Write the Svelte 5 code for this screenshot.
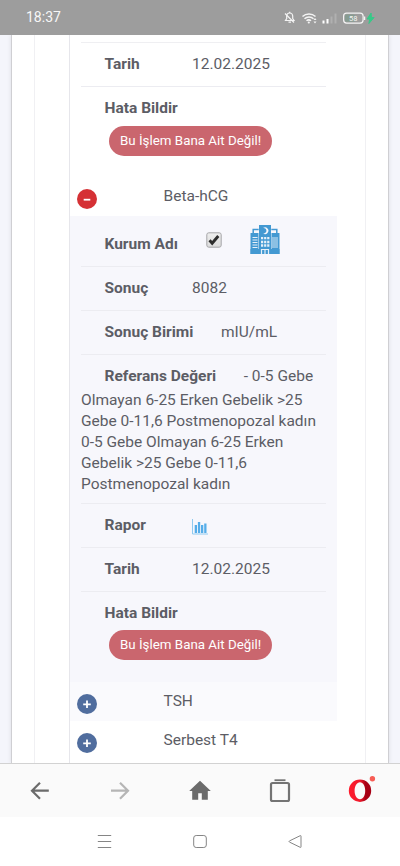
<script>
  let results = $state([
    { name: 'Beta-hCG', open: true },
    { name: 'TSH', open: false },
    { name: 'Serbest T4', open: false }
  ]);

  const date = '12.02.2025';
  const reference =
    '- 0-5 Gebe Olmayan 6-25 Erken Gebelik >25 Gebe 0-11,6 Postmenopozal kadın 0-5 Gebe Olmayan 6-25 Erken Gebelik >25 Gebe 0-11,6 Postmenopozal kadın';
</script>

{#snippet dateAndReport()}
  <li><span class="label">Tarih</span><span>{date}</span></li>
  <li class="report">
    <span class="label">Hata Bildir</span>
    <button class="pill">Bu İşlem Bana Ait Değil!</button>
  </li>
{/snippet}

<div class="screen">
  <header>
    <span class="time">18:37</span>
    <svg class="status" width="96" height="20" viewBox="0 0 96 20" fill="none">
      <!-- muted bell -->
      <g stroke="#f4f4f4" stroke-width="1.2">
        <path d="M3.500 12.500h8.500l-1.300-2V8a3 3 0 0 0-6 0v2.500z" />
        <path d="M3 5.500l9 9M6.500 14.200h2.500M7.700 3.800v1.200" />
      </g>
      <!-- wifi -->
      <g stroke="#f4f4f4" stroke-width="1.500">
        <path d="M20.500 8.500a9.500 9.500 0 0 1 13 0" />
        <path d="M22.500 10.800a6.500 6.500 0 0 1 9 0" />
        <path d="M24.500 12.800a3.500 3.500 0 0 1 4.500 0" />
      </g>
      <circle cx="26.800" cy="14.500" r="1.100" fill="#f4f4f4" />
      <path d="M31.500 12l1.500-2 1.500 2zM31.500 13.500l1.500 2 1.500-2z" fill="#f4f4f4" />
      <!-- signal -->
      <path d="M40.500 12.500h2v3h-2zM44.500 11h2v4.500h-2z" fill="#fff" />
      <path d="M48.500 8.500h2v7h-2zM52.500 5.500h2v10h-2z" fill="#b0b0b0" />
      <!-- battery -->
      <rect x="61.600" y="5.100" width="19.500" height="10" rx="3" stroke="#f4f4f4" stroke-width="1.200" />
      <rect x="63" y="6.500" width="10" height="7.200" rx="1.500" fill="#879c91" />
      <path d="M82.600 8.500v3.500" stroke="#f4f4f4" stroke-width="1.300" />
      <text x="71.300" y="12.800" text-anchor="middle">58</text>
      <path d="M89.100 5l-4 6h2.600l-.8 4.500 5.200-6h-2.700z" fill="#37c988" stroke="#37c988" />
    </svg>
  </header>

  <div class="page">
    <div class="card">
      <div class="inner">
        <div class="table">
          <ul class="details previous">
            {@render dateAndReport()}
          </ul>
          {#each results as result, i (result.name)}
            <div class="result" class:odd={i % 2 === 1}>
              <button
                class="toggle"
                class:open={result.open}
                aria-label={result.name}
                onclick={() => (result.open = !result.open)}
              >
                <svg width="10" height="10" viewBox="0 0 10 10" stroke="#fff" stroke-width="1.800">
                  {#if result.open}
                    <path d="M1.700 5.700h6.600" />
                  {:else}
                    <path d="M1.200 5.300h7.600M5 1.500v7.600" />
                  {/if}
                </svg>
              </button>
              <span>{result.name}</span>
            </div>
            {#if result.open}
              <ul class="details expanded">
                <li class="institution">
                  <span class="label">Kurum Adı</span>
                  <span class="check">
                    <svg width="16" height="16" viewBox="0 0 16 16">
                      <defs>
                        <linearGradient id="box" x2="0" y2="1">
                          <stop stop-color="#eee" />
                          <stop offset="1" stop-color="#dcdcdc" />
                        </linearGradient>
                      </defs>
                      <rect x=".8" y=".8" width="14.400" height="14.400" rx="2" fill="url(#box)" stroke="#a5a5a8" />
                      <path d="M3.500 8.200l2.700 3L12.300 4" fill="none" stroke="#2d2d2d" stroke-width="2.900" />
                    </svg>
                  </span>
                  <svg class="hospital" width="30" height="30" viewBox="0 0 30 30" fill="#4399d2">
                    <path d="M9 0h12v29H9zM.5 10h8v19h-8zM21.500 8h8v21h-8z" />
                    <path d="M3.200 8V4.600h5.500M26.800 8V4.600h-5.500" fill="none" stroke="#4399d2" stroke-width="1.500" />
                    <path d="M.5 8h8v2h-8zM.5 24h29v5H.500z" />
                    <path d="M13 3.100a3.300 3.300 0 1 1 0 5.200 2.700 2.700 0 1 0 0-5.200z" fill="#f7f7fc" />
                    <g stroke="#e5f0f9">
                      <path d="M11 13.200h8.500M11 17h8.500M11 20.500h8.500" stroke-width="2.300" stroke-dasharray="2.200 .9" />
                      <path d="M2.500 12.500h5M2.500 15h5M2.500 17.500h5M2.500 20h5M2.500 22.500h5" stroke-width="1.200" />
                      <path d="M23 12v11M25 12v11M27 12v11" stroke-width=".9" />
                      <path d="M11.500 29v-4.500h7V29M15 24.500V29" fill="none" stroke-width="1.200" />
                    </g>
                  </svg>
                </li>
                <li><span class="label">Sonuç</span><span>8082</span></li>
                <li><span class="label">Sonuç Birimi</span><span>mIU/mL</span></li>
                <li><span class="label">Referans Değeri</span>{reference}</li>
                <li class="chart">
                  <span class="label">Rapor</span>
                  <svg width="16" height="17" viewBox="0 0 16 17" fill="#55ade9">
                    <path d="M2.700 7h2.300v8H2.700zM5.900 4h2.300v11H5.900zM9 7h2.300v8H9zM12.200 5.500h2.300V15h-2.300z" />
                    <path d="M.5 1v15H16" fill="none" stroke="#8fcaf0" />
                  </svg>
                </li>
                {@render dateAndReport()}
              </ul>
            {/if}
          {/each}
        </div>
      </div>
    </div>
  </div>

  <nav class="browser">
    <svg viewBox="0 0 24 24" stroke="#6b6b6b">
      <path d="M20.800 11.700H4M12 3.700l-8 8 8 8" />
    </svg>
    <svg viewBox="0 0 24 24" stroke="#b5b5b5">
      <path d="M3 11.700h17M12 3.700l8 8-8 8" />
    </svg>
    <svg viewBox="0 0 24 24">
      <path d="M12 1.800L1.200 12.100h3v8.600h6v-6.400h3.600v6.400h6v-8.600h3z" fill="#6b6b6b" />
    </svg>
    <svg viewBox="0 0 24 24" stroke="#747474">
      <rect x="3" y="4" width="18" height="18" rx="1.500" />
      <path d="M6.500 1.200h11" stroke-width="1.800" />
    </svg>
    <svg viewBox="0 0 24 24">
      <defs>
        <linearGradient id="opera">
          <stop stop-color="#ff1b2d" />
          <stop offset=".5" stop-color="#f01a2c" />
          <stop offset=".75" stop-color="#a70014" />
          <stop offset="1" stop-color="#a70014" />
        </linearGradient>
      </defs>
      <path
        d="M12 .5a11.200 11.200 0 1 0 0 22.400A11.200 11.200 0 1 0 12 .5zM12 3.200c3.200 0 5.200 3.800 5.200 8.500s-2 8.500-5.200 8.500-5.400-3.800-5.400-8.500 2.200-8.500 5.400-8.500z"
        fill="url(#opera)"
        fill-rule="evenodd"
      />
      <circle cx="24.400" cy="-.2" r="2.700" fill="#f75d55" />
    </svg>
  </nav>

  <nav class="system">
    <svg viewBox="0 0 16 16"><path d="M.8 1.500h13.400M.8 7.500h13.400M.8 13.500h13.400" /></svg>
    <svg viewBox="0 0 16 16"><rect x="1.700" y="1.500" width="12.600" height="12" rx="2.500" /></svg>
    <svg viewBox="0 0 16 16">
      <path d="M14 2.200v10.600q0 .9-.8.500L2.500 8.100q-.9-.6 0-1.200l10.700-5.200q.8-.4.800.5z" />
    </svg>
  </nav>
</div>

<style>
  :global(body) {
    margin: 0;
    background: #fff;
  }

  .screen {
    display: flex;
    flex-direction: column;
    width: 400px;
    height: 866px;
    overflow: hidden;
    font-family: Roboto, sans-serif;
    font-size: 15.5px;
    line-height: 21px;
    color: #5c5d65;
  }

  header {
    display: flex;
    flex: none;
    align-items: center;
    justify-content: space-between;
    box-sizing: border-box;
    height: 35px;
    padding: 0 22px 0 26px;
    background: #9d9d9d;
    color: #f7f7f7;
  }

  .time {
    font-size: 14px;
  }

  .status {
    overflow: visible;
  }

  .status text {
    fill: #f4f4f4;
    font-size: 7.5px;
  }

  .page {
    flex: 1;
    min-height: 0;
    overflow: hidden;
    padding: 0 11px;
    background: #f4f5fb;
  }

  .card {
    height: 100%;
    box-sizing: border-box;
    padding: 0 22px;
    border: solid #cfcfd3;
    border-width: 0 1px;
    background: #fff;
    box-shadow: 0 0 4px #dcdce2;
  }

  .inner {
    height: 100%;
    box-sizing: border-box;
    border: solid #f0f0f3;
    border-width: 0 1px;
    padding-left: 34px;
  }

  .table {
    width: 267px;
    height: 100%;
    border-left: 1px solid #e6e6eb;
  }

  .details {
    list-style: none;
    margin: 0;
    padding: 0 11px;
  }

  .previous {
    height: 135px;
    padding-top: 7px;
  }

  .previous::before {
    content: '';
    display: block;
    height: 1px;
    background: #efeff2;
  }

  .expanded {
    box-sizing: border-box;
    height: 466px;
    padding-top: 7px;
    background: #f7f7fc;
  }

  li {
    padding: 11.4px 0 7.5px;
    border-bottom: 1px solid #ececf1;
  }

  .label {
    display: inline-block;
    min-width: 60px;
    margin-right: 27.5px;
    padding: 0 0 3px 23.5px;
    font-weight: 700;
  }

  .institution,
  .chart {
    display: flex;
    box-sizing: border-box;
    height: 44px;
  }

  .check {
    margin: -2.5px 28px 0 0;
    padding-left: 1px;
  }

  .hospital {
    margin-top: -9.5px;
  }

  .chart svg {
    margin-top: 3px;
  }

  .report {
    border: 0;
  }

  .pill {
    display: block;
    height: 30px;
    margin: 3.5px 0 0 28px;
    padding: 0 11px 1px;
    border: 0;
    border-radius: 15px;
    background: #ca666e;
    color: #fff;
    font: 13.35px Roboto, sans-serif;
  }

  .result {
    display: flex;
    box-sizing: border-box;
    height: 39px;
    padding: 9.4px 0 0 6.5px;
  }

  .odd {
    background: #fafafd;
  }

  .toggle {
    display: flex;
    align-items: center;
    justify-content: center;
    width: 20px;
    height: 20px;
    margin: 3px 67px 0 0;
    padding: 0;
    border: 0;
    border-radius: 50%;
    background: #506d9e;
  }

  .toggle.open {
    background: #d53135;
  }

  .browser {
    display: grid;
    grid-template-columns: repeat(5, 1fr);
    flex: none;
    place-items: center;
    height: 53px;
    border-top: 1px solid #d2d2d2;
    background: #fafafa;
  }

  .browser svg {
    width: 24px;
    height: 24px;
    overflow: visible;
    fill: none;
    stroke-width: 2.2;
  }

  .system {
    display: flex;
    flex: none;
    justify-content: center;
    gap: 79px;
    height: 49px;
    align-items: center;
    background: #fff;
  }

  .system svg {
    width: 16px;
    height: 16px;
    fill: none;
    stroke: #858585;
  }
</style>
